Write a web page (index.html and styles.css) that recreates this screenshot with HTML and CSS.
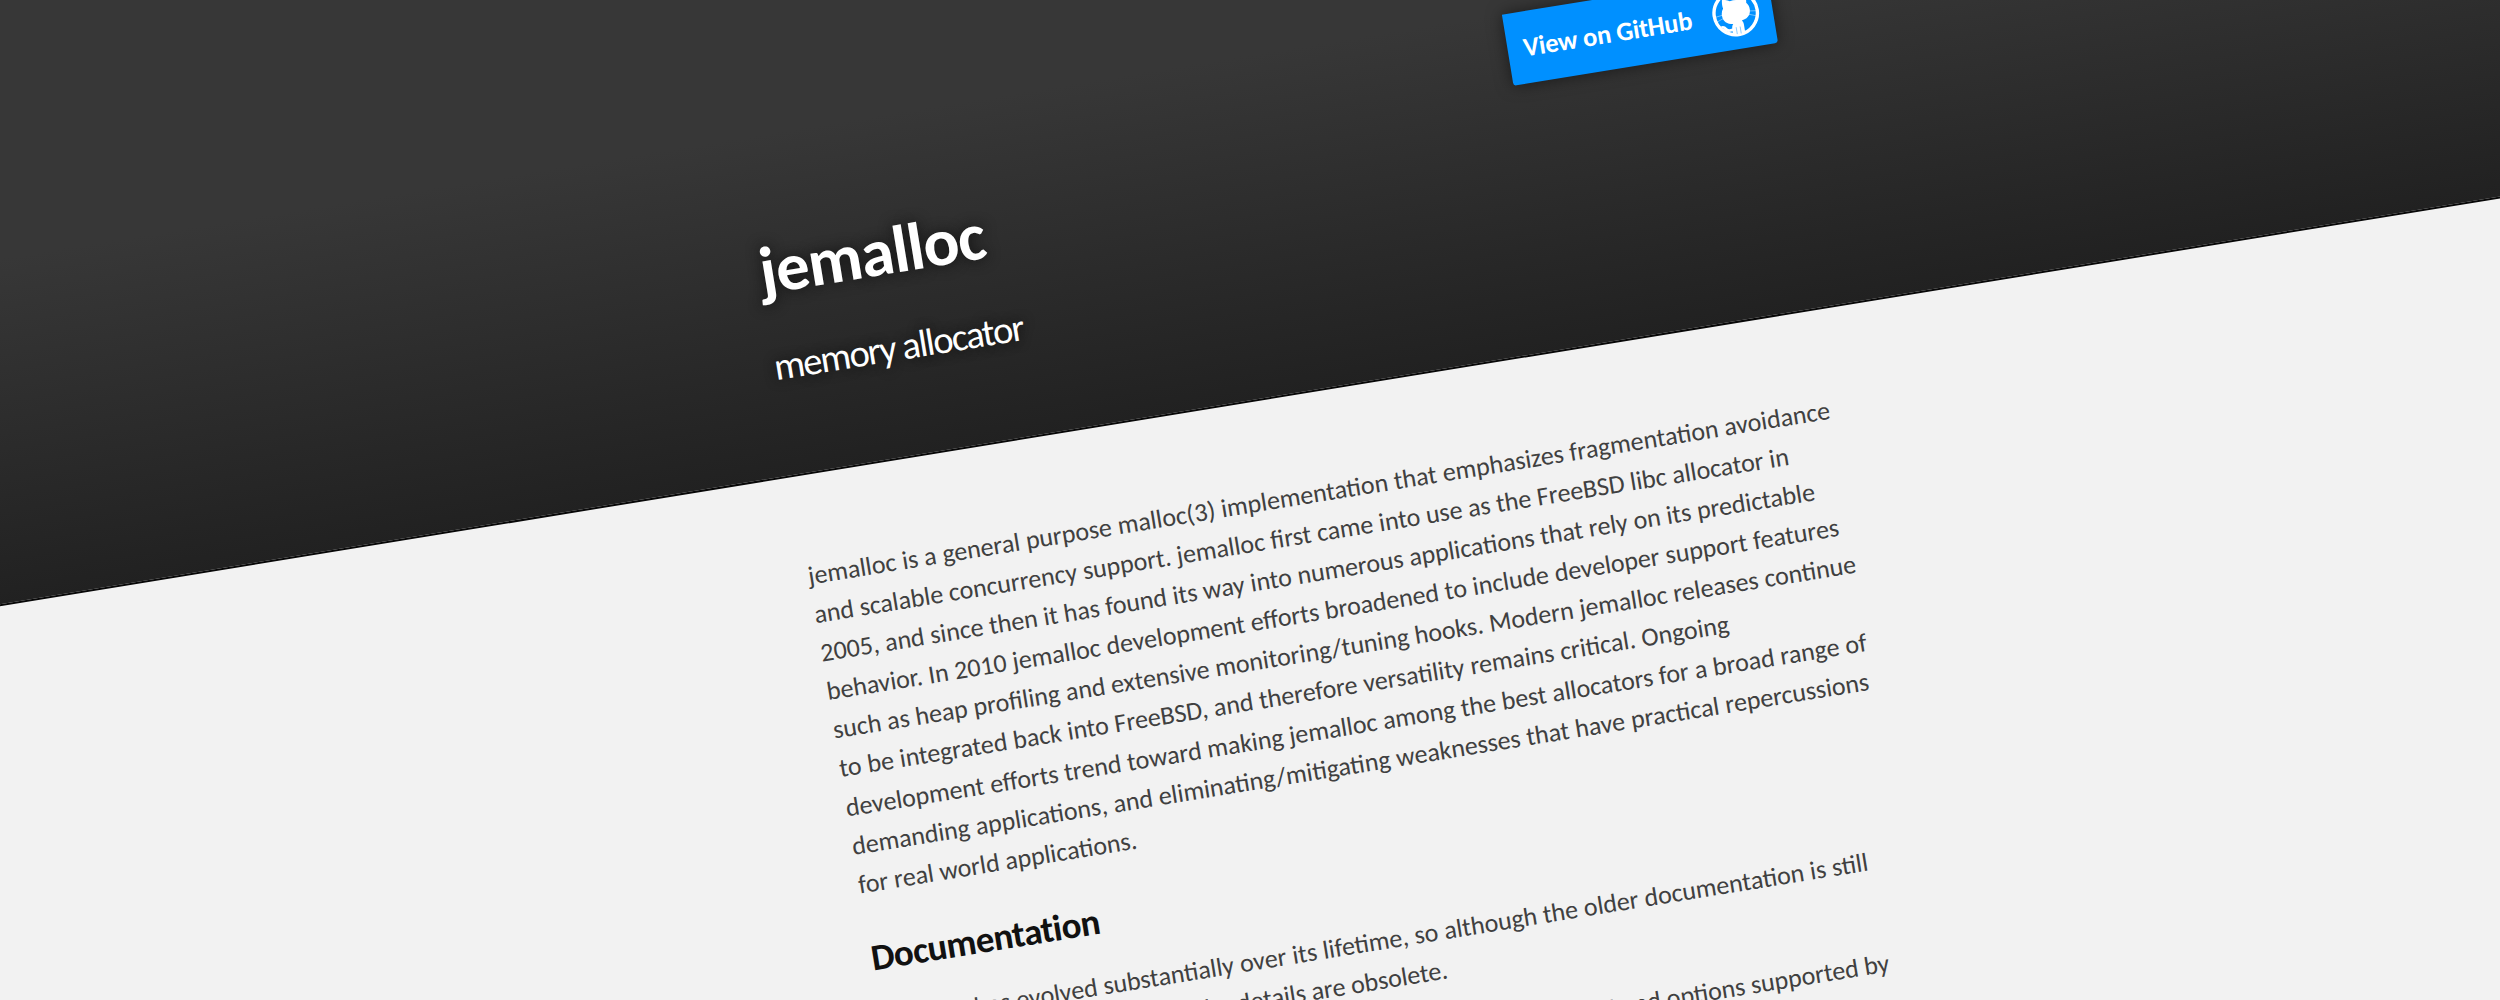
FILE: index.html
```html
<!DOCTYPE html>
<html lang="en">
<head>
<meta charset="utf-8">
<title>jemalloc</title>
<link rel="stylesheet" href="styles.css">
</head>
<body>
<header class="banner">
  <div class="banner-inner">
    <a class="fork">View on GitHub
      <svg class="mark" viewBox="0 0 48 48" aria-hidden="true">
        <circle cx="24" cy="24" r="21.7" fill="none" stroke="#fff" stroke-width="3.4"/>
        <path fill="#fff" d="M12.500 9c3.200 0 5.800 1.200 7.500 2.500 2.700-.7 5.300-.7 8 0 2-1.500 4.500-2.500 7.500-2.500 1 2.500 1 4.500.5 6.500 1.900 2.200 2.600 4.600 2.500 7.300-.3 6-4.200 8.700-9.700 9.500 1.300 1.500 1.500 3 1.500 5V46H18v-4.500c-5.500.8-7.300-1.200-8.700-3.900-.7-1.300-1.700-1.800-2.700-2.400 3-1.200 4.900.3 6.200 2.100 1.400 1.900 3 2 5.300 1.300.2-2 .8-3.200 1.700-4.200-6.200-1-9.600-4-9.800-9.800-.1-2.500.6-5 2.300-7.100-.6-2-.6-5 .2-8.500z"/>
        <path d="M22.200 38v7M26.200 38v7" stroke="#0090ff" stroke-width=".7" opacity=".6"/>
        <path d="M3 25l8-1M37 24l8 1M4 30l8-3M36 27l8 3" stroke="#fff" stroke-width=".6" opacity=".7"/>
      </svg>
    </a>
    <h1 class="title">jemalloc</h1>
    <h2 class="tagline">memory allocator</h2>
  </div>
</header>
<main class="content">
  <p class="para">
    <span class="line" style="width:1035px">jemalloc is a general purpose malloc(3) implementation that emphasizes fragmentation avoidance</span>
    <span class="line" style="width:987px">and scalable concurrency support. jemalloc first came into use as the FreeBSD libc allocator in</span>
    <span class="line" style="width:1007px">2005, and since then it has found its way into numerous applications that rely on its predictable</span>
    <span class="line" style="width:1025px">behavior. In 2010 jemalloc development efforts broadened to include developer support features</span>
    <span class="line" style="width:1036px">such as heap profiling and extensive monitoring/tuning hooks. Modern jemalloc releases continue</span>
    <span class="line" style="width:901px">to be integrated back into FreeBSD, and therefore versatility remains critical. Ongoing</span>
    <span class="line" style="width:1034px">development efforts trend toward making jemalloc among the best allocators for a broad range of</span>
    <span class="line" style="width:1030px">demanding applications, and eliminating/mitigating weaknesses that have practical repercussions</span>
    <span class="line" style="width:282px">for real world applications.</span>
  </p>
  <section class="docs">
    <h3 class="heading">Documentation</h3>
    <p class="para">
      <span class="line" style="width:1000px">jemalloc has evolved substantially over its lifetime, so although the older documentation is still</span>
      <span class="line" style="width:567px">of historical interest, some of the details are obsolete.</span>
    </p>
    <ul class="list">
      <li class="item">The manual page for the latest release fully describes the API and options supported by</li>
    </ul>
  </section>
</main>
</body>
</html>
```
FILE: styles.css
```css
html, body {
  margin: 0;
  height: 1000px;
  overflow: hidden;
  background: #f2f2f2;
}
body {
  display: flow-root;
  font-family: Carlito, Lato, sans-serif;
  color: #404040;
}
.banner {
  box-sizing: border-box;
  width: 2900px;
  height: 800px;
  margin: -167.5px 0 0 -229px;
  padding: 458px 0 0 902px;
  border-bottom: 2px solid #080808;
  background: linear-gradient(#373737 457px, #212121 800px);
  transform: matrix(.987, -.161, .161, .987, 0, 0);
  transform-origin: 0 0;
}
.banner-inner {
  width: 1045px;
  display: flex;
  flex-direction: column;
}
.fork {
  box-sizing: border-box;
  align-self: flex-end;
  display: flex;
  align-items: center;
  justify-content: space-between;
  width: 268px;
  height: 72px;
  padding: 0 13px 0 16px;
  border-radius: 0 0 3px 3px;
  background: #0090ff;
  box-shadow: 0 0 16px rgba(0, 0, 0, .5);
  color: #fff;
  font-size: 26.5px;
  font-weight: 900;
  letter-spacing: -.2px;
  white-space: nowrap;
}
.mark {
  width: 48px;
  height: 48px;
}
.title {
  margin: 22.500px 0 0 3px;
  color: #fff;
  font-size: 67px;
  font-weight: 700;
  line-height: 78px;
  letter-spacing: -1px;
  text-shadow: 0 0 14px #111;
}
.tagline {
  margin: 36.500px 0 0 2px;
  color: #fff;
  font-size: 38.5px;
  font-weight: 300;
  line-height: 44px;
  letter-spacing: -1.6px;
  text-shadow: 0 0 12px #111;
}
.content {
  width: 1120px;
  margin: -75.5px 0 0 805px;
  transform: rotate(-9.23deg);
  transform-origin: 0 0;
  font-size: 26px;
  line-height: 39.1px;
}
.para {
  margin: 0;
}
.line {
  display: block;
  white-space: nowrap;
  text-align-last: justify;
}
.docs {
  display: flow-root;
}
.heading {
  margin: 33px 0 24px 1px;
  color: #111;
  font-size: 37px;
  font-weight: 700;
  line-height: 43px;
  letter-spacing: -.6px;
}
.list {
  width: 1005px;
  margin: 25px 0 0;
  padding: 0;
  list-style: none;
}
.item {
  display: flex;
  justify-content: flex-end;
  white-space: nowrap;
}
```
